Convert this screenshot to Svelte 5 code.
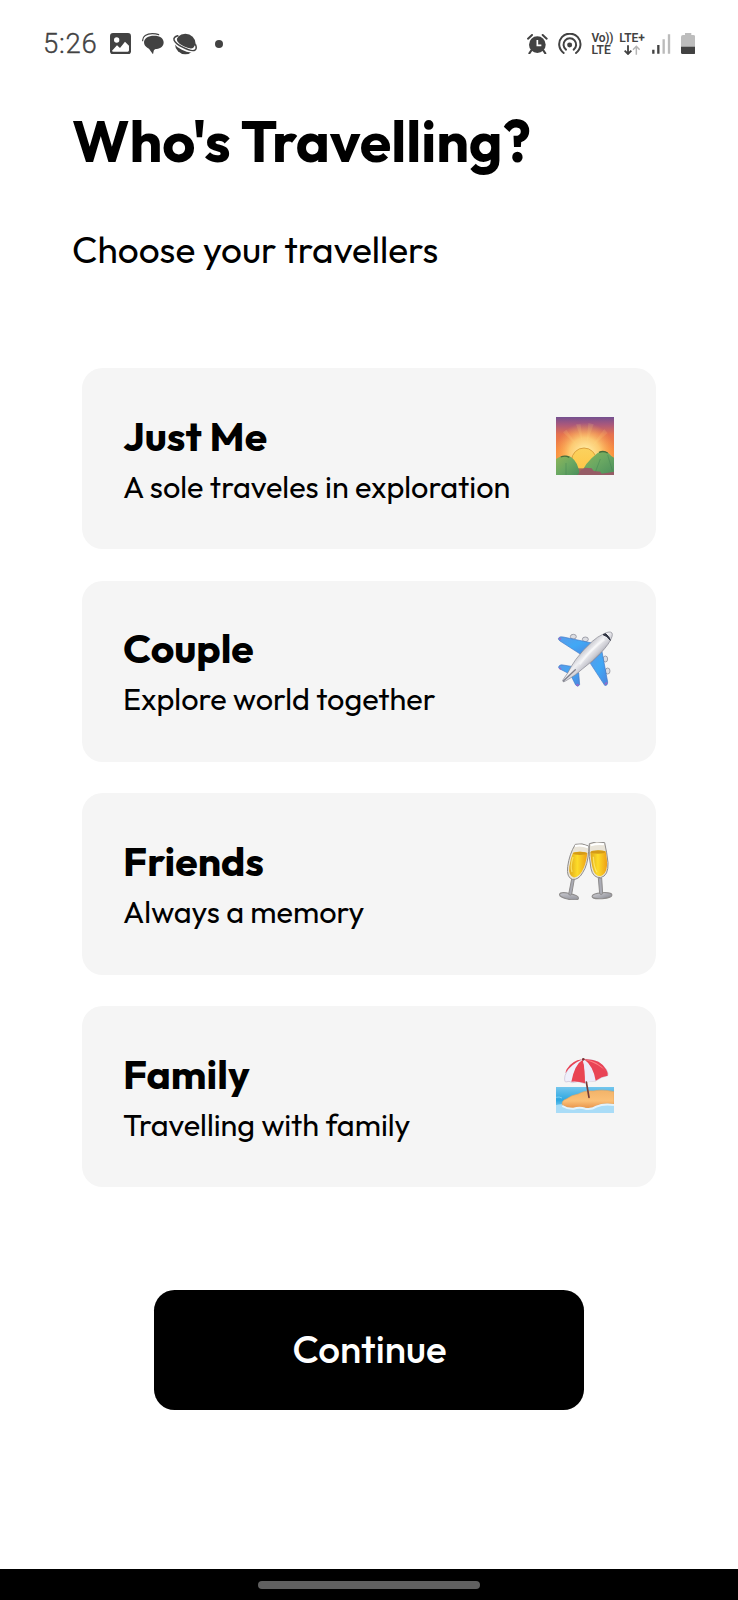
<script>
  const options = [
    { title: 'Just Me', desc: 'A sole traveles in exploration', icon: 'sunrise' },
    { title: 'Couple', desc: 'Explore world together', icon: 'plane' },
    { title: 'Friends', desc: 'Always a memory', icon: 'glasses' },
    { title: 'Family', desc: 'Travelling with family', icon: 'beach' }
  ];
</script>

{#snippet sunrise()}
  <svg class="emoji" viewBox="33 36 174 174">
    <defs>
      <linearGradient id="sky" x1="0" y1="0" x2="0" y2="1">
        <stop offset="0" stop-color="#74508f" />
        <stop offset=".13" stop-color="#a9587c" />
        <stop offset=".3" stop-color="#e5714f" />
        <stop offset=".6" stop-color="#f98d3d" />
        <stop offset="1" stop-color="#f9a44a" />
      </linearGradient>
      <radialGradient id="glow" cx=".5" cy=".62" r=".52">
        <stop offset="0" stop-color="#fff6b4" />
        <stop offset=".5" stop-color="#ffdc7e" stop-opacity=".8" />
        <stop offset="1" stop-color="#ffb050" stop-opacity="0" />
      </radialGradient>
      <linearGradient id="sun" x1="0" y1="0" x2="0" y2="1">
        <stop offset="0" stop-color="#fbd25e" />
        <stop offset="1" stop-color="#ffc545" />
      </linearGradient>
      <linearGradient id="hill" x1="0" y1="0" x2="1" y2="1">
        <stop offset="0" stop-color="#8fb558" />
        <stop offset=".5" stop-color="#6aa862" />
        <stop offset="1" stop-color="#4b8f5c" />
      </linearGradient>
    </defs>
    <rect x="33" y="36" width="174" height="174" fill="url(#sky)" />
    <rect x="33" y="36" width="174" height="174" fill="url(#glow)" />
    <path d="M114 120 93 58l14 0zM124 120l6-66 16 4zM138 126l40-54 10 12zM100 126 54 82l10-8z" fill="#ffe08a" opacity=".14" />
    <ellipse cx="117" cy="166" rx="37" ry="37" fill="url(#sun)" stroke="#dca03e" stroke-width="3" />
    <path d="M98 190h50v20H98z" fill="#a3675c" />
    <path d="M33 162q10-8 22-8 12-4 24 3 22 16 25 53H33z" fill="url(#hill)" />
    <path d="M108 210q8-34 50-66 16-10 32 0 8 10 17 14v52z" fill="url(#hill)" />
    <path d="M47 156q14-6 26 1M162 142q14-6 26 2" stroke="#456d3c" stroke-width="4" fill="none" />
    <path d="M63 174v36M166 162l-16 42M188 150l14 46" stroke="#3d7c51" stroke-width="3" fill="none" opacity=".4" />
    <path d="M98 210l10-14 12-8 20 2 6 8 20 2 4 6 37-6v10z" fill="#965c66" />
  </svg>
{/snippet}

{#snippet plane()}
  <svg class="emoji" viewBox="33 29 174 174">
    <defs>
      <linearGradient id="wing" x1="0" y1="0" x2="1" y2="1">
        <stop offset="0" stop-color="#5a9be8" />
        <stop offset=".5" stop-color="#40a8f6" />
        <stop offset="1" stop-color="#4d84dc" />
      </linearGradient>
      <linearGradient id="body" x1=".35" y1=".35" x2=".65" y2=".65">
        <stop offset="0" stop-color="#b7b7bf" />
        <stop offset=".4" stop-color="#f0f0f3" />
        <stop offset=".7" stop-color="#cbcbd2" />
        <stop offset="1" stop-color="#8d8d98" />
      </linearGradient>
    </defs>
    <g fill="#dcdde2" stroke="#92939d" stroke-width="2.5">
      <ellipse cx="85" cy="49" rx="9" ry="7" />
      <ellipse cx="121" cy="57" rx="9" ry="7" />
      <ellipse cx="181" cy="116" rx="7" ry="9" />
      <ellipse cx="188" cy="152" rx="7" ry="9" />
    </g>
    <path d="M40 54q3-7 15-4l86 18-34 34-62-40q-5-3-5-8z" fill="url(#wing)" stroke="#4278c5" stroke-width="2" />
    <path d="M171 94l17 91q0 12-9 10l-43-66z" fill="url(#wing)" stroke="#4278c5" stroke-width="2" />
    <path d="M42 137q5-5 12-3l30 5-14 20-27-14q-4-3-1-8zM101 157l3 36q-6 9-12 1l-14-28z" fill="url(#wing)" stroke="#4278c5" stroke-width="2" />
    <path d="M201 38q-6-7-24 2-20 9-35 23-30 27-50 55-14 20-24 40l-15 22 3 5 14-8q22-12 42-31 32-24 55-48 27-28 34-49 2-7 0-11z" fill="url(#body)" stroke="#85858f" stroke-width="2" />
    <path d="M174 43q12 3 22 17-3-12-14-20z" fill="#2d313f" stroke="#2d313f" stroke-width="3" />
    <path d="M55 182l36-34" stroke="#7f808c" stroke-width="4" stroke-linecap="round" />
    <path d="M104 132Q138 86 178 57" stroke="#fff" stroke-width="6" fill="none" opacity=".5" />
    <path d="M42 54l6 3M180 192l6-5M43 143l5 3M94 193l7 2" stroke="#9b68c7" stroke-width="5" />
  </svg>
{/snippet}

{#snippet glasses()}
  <svg class="emoji" viewBox="33 31 174 174">
    <defs>
      <linearGradient id="wine" x1="0" y1="0" x2="1" y2="0">
        <stop offset="0" stop-color="#dfa51b" />
        <stop offset=".45" stop-color="#fddc28" />
        <stop offset="1" stop-color="#eea017" />
      </linearGradient>
      <linearGradient id="foot" x1="0" y1="0" x2="1" y2="1">
        <stop offset="0" stop-color="#d0d0d5" />
        <stop offset="1" stop-color="#898a93" />
      </linearGradient>
    </defs>
    <g stroke="#8e8c8c" stroke-width="3">
      <ellipse cx="72" cy="194" rx="29" ry="9" transform="rotate(12 72 194)" fill="url(#foot)" />
      <path d="M80 142h8l-8 46q-4 5-9 0z" fill="#aaabb4" />
      <path d="M91 38q20-5 40 5 2 4 0 16-3 42-18 64-13 23-31 20-18-6-14-38 5-38 23-67z" fill="#e9e4d8" />
      <ellipse cx="171" cy="192" rx="30" ry="9" transform="rotate(-4 171 192)" fill="url(#foot)" />
      <path d="M160 139h10l3 47q-5 5-9 0z" fill="#aaabb4" />
      <path d="M133 36q22-10 46-3 7 31 10 60 2 39-22 45-23 1-29-27-8-36-5-75z" fill="#e9e4d8" />
    </g>
    <path d="M84 63q20-6 43 1-4 37-17 57-12 18-25 16-15-7-12-32 3-24 11-42z" fill="url(#wine)" />
    <path d="M136 61q22-8 46-2 5 26 4 43-2 25-20 32-17 0-23-24-5-18-7-49z" fill="url(#wine)" />
    <ellipse cx="105" cy="65" rx="21" ry="5" fill="#d59b17" />
    <ellipse cx="159" cy="61" rx="22" ry="5" fill="#d59b17" />
    <path d="M90 43q20-4 39 4M137 41q20-6 40-3" stroke="#fff" stroke-width="6" fill="none" />
    <path d="M84 76q-9 29-3 45M145 75q1 31 11 47" stroke="#fff07a" stroke-width="4" fill="none" opacity=".7" />
  </svg>
{/snippet}

{#snippet beach()}
  <svg class="emoji" viewBox="33 29 174 174">
    <defs>
      <linearGradient id="sea" x1="0" y1="0" x2="0" y2="1">
        <stop offset="0" stop-color="#74c6ed" />
        <stop offset=".5" stop-color="#2da7e1" />
        <stop offset="1" stop-color="#b7e5fa" />
      </linearGradient>
      <linearGradient id="sand" x1="0" y1="0" x2="0" y2="1">
        <stop offset="0" stop-color="#f2b369" />
        <stop offset=".6" stop-color="#fbc077" />
        <stop offset="1" stop-color="#e9954c" />
      </linearGradient>
    </defs>
    <path d="M33 125h174v78H33z" fill="url(#sea)" />
    <path d="M33 179q16-5 34 0 20-2 41 6 20-8 40-10 25-4 59 0v28H33z" fill="#a9dcf7" />
    <path d="M52 178q-3-12 12-17 16-12 36-15 18-11 46-9 27-6 61 2v38q-30-6-52 4-14 10-35 6-16-3-36 1-20 0-32-10z" fill="url(#sand)" stroke="#e6a661" stroke-width="2" />
    <path d="M52 182q14 9 34 8 18-5 34 0 18 4 34-6 22-10 53-5" stroke="#e2f3fd" stroke-width="6" fill="none" />
    <path d="M33 156q10-3 18 2" stroke="#77cff3" stroke-width="3" fill="none" />
    <path d="M114 42Q73 51 60 91q-3 16 2 19 10-5 20 2 15-7 36 2 14-9 34-7 15-12 36-16 4-8-8-24-25-28-66-25z" fill="#eff0fb" stroke="#b9aac6" stroke-width="1.5" />
    <path d="M113 43Q89 57 79 109q21-2 41 5 3-45-7-71z" fill="#e94354" />
    <path d="M114 43q6 30 6 71 14-9 32-8-10-45-38-63z" fill="#ecebfa" />
    <path d="M112 42Q80 46 65 72q-3 7-4 12 17-27 51-42zM117 42q48-3 67 31 5 8 4 18-18 2-36 15-8-45-35-64z" fill="#e94456" />
    <path d="M119 43q42 2 67 39-22-27-67-39z" fill="#ff8083" />
    <circle cx="115" cy="42" r="4" fill="#7d3237" />
    <path d="M124 110l8 46" stroke="#753b37" stroke-width="5" stroke-linecap="round" />
  </svg>
{/snippet}

<div class="screen">
  <header class="status">
    <div class="left">
      <span class="time">5:26</span>
      <svg class="picture" viewBox="240 38 63 64" width="21" height="21.3">
        <rect x="240" y="38" width="63" height="64" rx="9" fill="#424242" />
        <circle cx="260" cy="59" r="8" fill="#fff" />
        <path d="M246 91l15-16 9 8 15-19 12 12v14q0 4-4 4h-43q-4 0-4-3z" fill="#fff" />
      </svg>
      <svg class="chat" viewBox="335 40 66 64" width="22" height="21.3">
        <path d="M371 48c18 0 29 8 29 20s-9 19-21 20c-4 0-8 2-9 6l-2 10-9-12c-1-3-3-5-7-7-7-4-11-9-11-17 0-12 13-20 30-20z" fill="#424242" />
        <path d="M337 63c-1-13 12-21 29-21 9 0 14 1 19 3" fill="none" stroke="#424242" stroke-width="3.5" stroke-linecap="round" />
      </svg>
      <svg class="planet" viewBox="424 36 80 66" width="26.7" height="22">
        <circle cx="464" cy="69" r="31" fill="#424242" />
        <g transform="rotate(27 464 66)" fill="none">
          <path d="M430 59C426 78 446 83 464 83S502 78 498 59" stroke="#fff" stroke-width="12" />
          <path d="M434 57C420 70 428 81 464 81S508 70 494 57" stroke="#424242" stroke-width="4.5" stroke-linecap="round" />
        </g>
      </svg>
      <i class="dot"></i>
    </div>
    <div class="right">
      <svg class="alarm" viewBox="36 40 62 60" width="20.7" height="20">
        <circle cx="67" cy="72" r="25" fill="#424242" />
        <path d="M39 54l12-11M95 54L83 43M49 89l-6 9M85 89l6 9" stroke="#424242" stroke-width="6" stroke-linecap="round" />
        <path d="M67 58v16h12" stroke="#fff" stroke-width="5" fill="none" />
      </svg>
      <svg class="hotspot" viewBox="127 40 72 64" width="24" height="21.3">
        <g fill="none" stroke="#424242" stroke-width="6" stroke-linecap="round">
          <path d="M144 100a32 32 0 1 1 37 0" />
          <path d="M151 90a19 19 0 1 1 23 0" />
        </g>
        <circle cx="162" cy="76" r="7.5" fill="#424242" />
      </svg>
      <div class="volte"><span>Vo))</span><span>LTE</span></div>
      <div class="lte">
        <span>LTE+</span>
        <svg viewBox="327 76 48 30" width="16" height="10">
          <path d="M339 77v26M329 93l10 10 10-10" stroke="#424242" stroke-width="5.5" fill="none" />
          <path d="M364 105V80M354 90l10-10 10 10" stroke="#b5b5b5" stroke-width="4.5" fill="none" />
        </svg>
      </div>
      <svg class="signal" viewBox="411 40 56 60" width="18.7" height="20">
        <path d="M415 87v12M430 73v26" stroke="#424242" stroke-width="7" />
        <path d="M446 56v43M462 41v58" stroke="#bbb" stroke-width="7" />
      </svg>
      <svg class="battery" viewBox="497 38 43 64" width="14.3" height="21.3">
        <path d="M509 38h19v6h6q6 0 6 6v30h-43V50q0-6 6-6h6z" fill="#bdbdbd" />
        <path d="M497 79h43v17q0 6-6 6h-31q-6 0-6-6z" fill="#424242" />
      </svg>
    </div>
  </header>

  <main>
    <h1>Who's Travelling?</h1>
    <p class="lead">Choose your travellers</p>
    <div class="list">
      {#each options as o}
        <section class="card">
          <div class="copy">
            <h2>{o.title}</h2>
            <p>{o.desc}</p>
          </div>
          {#if o.icon === 'sunrise'}{@render sunrise()}
          {:else if o.icon === 'plane'}{@render plane()}
          {:else if o.icon === 'glasses'}{@render glasses()}
          {:else}{@render beach()}{/if}
        </section>
      {/each}
    </div>
    <button>Continue</button>
  </main>

  <footer><span class="pill"></span></footer>
</div>

<style>
  :global(body) { margin: 0; background: #fff; }
  .screen {
    width: 738px;
    height: 1600px;
    display: flex;
    flex-direction: column;
    background: #fff;
    color: #000;
    font-family: Outfit, Lato, sans-serif;
    overflow: hidden;
  }
  svg { display: block; flex: none; }
  .status {
    flex: none;
    height: 87px;
    box-sizing: border-box;
    padding: 0 43px;
    display: flex;
    justify-content: space-between;
    align-items: center;
    color: #424242;
  }
  .left, .right { display: flex; align-items: center; }
  .time { font: 300 27.5px/30px Roboto, sans-serif; width: 67px; letter-spacing: 0.7px; -webkit-text-stroke: 0.35px #424242; }
  .chat { margin-left: 10.7px; }
  .planet { margin-left: 8px; }
  .dot { width: 8px; height: 8px; border-radius: 50%; background: #424242; margin-left: 17px; }
  .hotspot { margin-left: 9.6px; }
  .volte, .lte {
    display: flex;
    flex-direction: column;
    align-items: center;
    font: 600 12px/12px Roboto, sans-serif;
    white-space: nowrap;
  }
  .volte { margin-left: 10px; width: 22px; align-items: flex-start; letter-spacing: -0.3px; }
  .volte span:last-child { letter-spacing: 0; }
  .lte { margin-left: 5px; width: 27px; letter-spacing: -0.1px; }
  .lte svg { margin-top: 1.5px; }
  .signal { margin-left: 6.5px; }
  .battery { margin-left: 10px; }

  main { flex: 1; display: flex; flex-direction: column; }
  h1, h2, p { margin: 0; font-weight: 400; white-space: nowrap; }
  h1 { margin: 19px 0 0 72px; font-size: 57.4px; line-height: 70px; font-weight: 700; }
  .lead { margin: 50px 0 0 72px; font-size: 37px; line-height: 48px; }
  .list { margin: 94px 82px 0; display: flex; flex-direction: column; gap: 31.2px; }
  .card {
    height: 181.4px;
    box-sizing: border-box;
    padding: 49px 42px 0 41px;
    display: flex;
    justify-content: space-between;
    align-items: flex-start;
    border-radius: 20.5px;
    background: #f5f5f5;
  }
  h2 { font-size: 40.9px; line-height: 44px; font-weight: 700; margin-top: -3.2px; }
  .card p { font-size: 30.65px; line-height: 40px; margin-top: 9px; }
  .emoji { width: 58px; height: 58px; }
  button {
    margin: 103px 154px 0;
    height: 120px;
    border: 0;
    border-radius: 20.5px;
    background: #000;
    color: #fff;
    padding: 0 0 4px 1px;
    font: 500 38.6px Outfit, Lato, sans-serif;
  }
  footer { flex: none; height: 31px; background: #000; display: flex; justify-content: center; align-items: center; }
  .pill { width: 222px; height: 8px; border-radius: 4px; background: #606060; }
</style>
